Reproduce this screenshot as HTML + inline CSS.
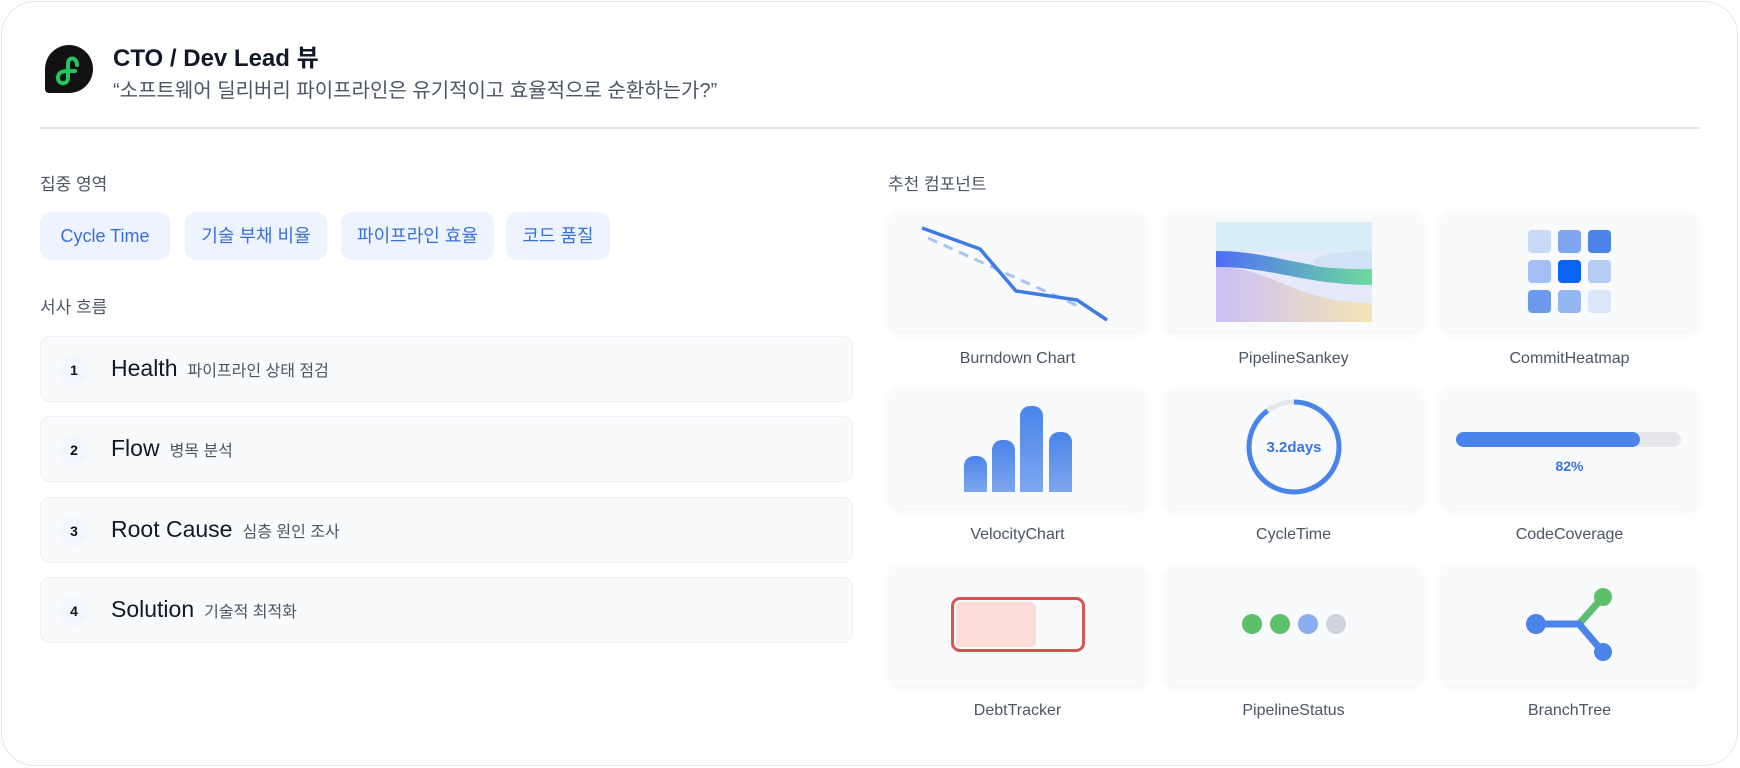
<!DOCTYPE html>
<html><head><meta charset="utf-8"><style>
*{margin:0;padding:0;box-sizing:border-box}
body{width:1740px;height:768px;background:#fff;font-family:"Liberation Sans","Noto Sans CJK KR",sans-serif;position:relative;overflow:hidden}
.card{position:absolute;left:1px;top:1px;width:1737px;height:765px;border:1px solid #e5e7eb;border-radius:34px;background:#fff}
.abs{position:absolute}
.title{left:113px;top:38px;font-size:24px;font-weight:bold;color:#111827}
.sub{left:113px;top:74px;font-size:20px;color:#4b5563}
.hr{left:40px;top:127px;width:1660px;height:2px;background:#e5e7eb}
.sec{font-size:17px;color:#4b5563}
.chip{position:absolute;top:212px;height:48px;background:#eef4ff;border-radius:11px;color:#3b6fd8;font-size:18px;line-height:48px;text-align:center}
.step{position:absolute;left:40px;width:813px;height:66px;background:#f9fafb;border:1px solid #eef0f3;border-radius:10px}
.num{position:absolute;left:18px;top:18px;width:30px;height:30px;border-radius:50%;background:#f3f6fc;font-size:14px;font-weight:bold;line-height:30px;text-align:center;color:#111}
.st{position:absolute;left:70px;top:18px;font-size:23px;color:#111827;white-space:nowrap}
.st span{font-size:16px;color:#4b5563;margin-left:10px}
.cc{position:absolute;width:259px;height:120px;background:#f8fafc;border-radius:12px;box-shadow:0 3px 8px rgba(0,0,0,.05)}
.lb{position:absolute;width:259px;text-align:center;font-size:16px;color:#4b5563}
</style></head><body>
<div class="card"></div>
<svg class="abs" style="left:45px;top:45px" width="49" height="49" viewBox="0 0 49 49">
<path d="M0 24A24 24 0 1 1 24 48H4a4 4 0 0 1-4-4Z" fill="#111"/>
<path d="M32 20C32 12 23 11 23 19V33C23 40 13 40 13 33C13 27 18 26 23 26H30" fill="none" stroke="#22c55e" stroke-width="4" stroke-linecap="round"/>
</svg>
<div class="abs title">CTO / Dev Lead 뷰</div>
<div class="abs sub">“소프트웨어 딜리버리 파이프라인은 유기적이고 효율적으로 순환하는가?”</div>
<div class="abs hr"></div>
<div class="abs sec" style="left:40px;top:170px">집중 영역</div>
<div class="chip" style="left:40px;width:130px">Cycle Time</div>
<div class="chip" style="left:185px;width:142px">기술 부채 비율</div>
<div class="chip" style="left:341px;width:153px">파이프라인 효율</div>
<div class="chip" style="left:506px;width:104px">코드 품질</div>
<div class="abs sec" style="left:40px;top:293px">서사 흐름</div>
<div class="step" style="top:336px"><div class="num">1</div><div class="st">Health<span>파이프라인 상태 점검</span></div></div>
<div class="step" style="top:416px"><div class="num">2</div><div class="st">Flow<span>병목 분석</span></div></div>
<div class="step" style="top:497px"><div class="num">3</div><div class="st">Root Cause<span>심층 원인 조사</span></div></div>
<div class="step" style="top:577px"><div class="num">4</div><div class="st">Solution<span>기술적 최적화</span></div></div>
<div class="abs sec" style="left:888px;top:170px">추천 컴포넌트</div>

<div class="cc" style="left:888px;top:211px"><svg width="259" height="120">
<path d="M40 27L190 95" stroke="#a9c3f5" stroke-width="3" stroke-dasharray="10 7" fill="none"/>
<path d="M34 17L92 38L128 80L189 89L219 109" stroke="#3f7be6" stroke-width="3.5" fill="none" stroke-linejoin="round"/>
</svg></div>
<div class="cc" style="left:1164px;top:211px"><svg width="259" height="120">
<defs><linearGradient id="g1"><stop offset="0" stop-color="#4f6ef7"/><stop offset="1" stop-color="#6ddb9c"/></linearGradient>
<linearGradient id="g2"><stop offset="0" stop-color="#c7b8f7"/><stop offset="1" stop-color="#f8e3a6"/></linearGradient></defs>
<rect x="52" y="11" width="156" height="100" fill="#d6eef9"/>
<rect x="52" y="40" width="156" height="71" fill="#e4e9fb"/>
<path d="M52 40C110 40 140 60 208 58V74C140 74 110 56 52 56Z" fill="url(#g1)"/>
<path d="M52 56C110 56 130 92 208 92V111H52Z" fill="url(#g2)" opacity=".85"/>
<path d="M150 48C170 40 190 40 208 40V58C190 58 170 58 150 55Z" fill="#cfe3f7"/>
</svg></div>
<div class="cc" style="left:1440px;top:211px">
<div class="abs" style="left:88px;top:19px;width:23px;height:23px;border-radius:4px;background:#c9d9f8"></div>
<div class="abs" style="left:118px;top:19px;width:23px;height:23px;border-radius:4px;background:#7fa6ef"></div>
<div class="abs" style="left:148px;top:19px;width:23px;height:23px;border-radius:4px;background:#4a84ea"></div>
<div class="abs" style="left:88px;top:49px;width:23px;height:23px;border-radius:4px;background:#a3bff3"></div>
<div class="abs" style="left:118px;top:49px;width:23px;height:23px;border-radius:4px;background:#0a63f5"></div>
<div class="abs" style="left:148px;top:49px;width:23px;height:23px;border-radius:4px;background:#b4cdf7"></div>
<div class="abs" style="left:88px;top:79px;width:23px;height:23px;border-radius:4px;background:#6c9bed"></div>
<div class="abs" style="left:118px;top:79px;width:23px;height:23px;border-radius:4px;background:#94b6f1"></div>
<div class="abs" style="left:148px;top:79px;width:23px;height:23px;border-radius:4px;background:#dbe6fb"></div>
</div>
<div class="lb" style="left:888px;top:350px">Burndown Chart</div>
<div class="lb" style="left:1164px;top:350px">PipelineSankey</div>
<div class="lb" style="left:1440px;top:350px">CommitHeatmap</div>

<div class="cc" style="left:888px;top:388px">
<div class="abs" style="left:76px;top:68px;width:23px;height:36px;border-radius:10px 10px 0 0;background:linear-gradient(#4a84ea,#7ea6ef)"></div>
<div class="abs" style="left:104px;top:52px;width:23px;height:52px;border-radius:10px 10px 0 0;background:linear-gradient(#4a84ea,#7ea6ef)"></div>
<div class="abs" style="left:132px;top:18px;width:23px;height:86px;border-radius:10px 10px 0 0;background:linear-gradient(#4a84ea,#7ea6ef)"></div>
<div class="abs" style="left:161px;top:44px;width:23px;height:60px;border-radius:10px 10px 0 0;background:linear-gradient(#4a84ea,#7ea6ef)"></div>
</div>
<div class="cc" style="left:1164px;top:388px"><svg width="259" height="120">
<circle cx="130" cy="59" r="45" fill="none" stroke="#e5e7eb" stroke-width="5"/>
<circle cx="130" cy="59" r="45" fill="none" stroke="#4a84ea" stroke-width="5" stroke-dasharray="254 283" transform="rotate(-90 130 59)"/>
<text x="130" y="64" text-anchor="middle" font-family="Liberation Sans" font-weight="bold" font-size="15" fill="#3b74de">3.2days</text>
</svg></div>
<div class="cc" style="left:1440px;top:388px">
<div class="abs" style="left:16px;top:44px;width:225px;height:15px;border-radius:8px;background:#e5e7eb"></div>
<div class="abs" style="left:16px;top:44px;width:184px;height:15px;border-radius:8px;background:#4a84ea"></div>
<div class="abs" style="left:0;top:70px;width:259px;text-align:center;font-size:14px;font-weight:bold;color:#3b74de">82%</div>
</div>
<div class="lb" style="left:888px;top:526px">VelocityChart</div>
<div class="lb" style="left:1164px;top:526px">CycleTime</div>
<div class="lb" style="left:1440px;top:526px">CodeCoverage</div>

<div class="cc" style="left:888px;top:565px">
<div class="abs" style="left:63px;top:32px;width:134px;height:55px;border:3px solid #d9534f;border-radius:9px"></div>
<div class="abs" style="left:68px;top:37px;width:80px;height:45px;border-radius:5px;background:#fadcd9"></div>
</div>
<div class="cc" style="left:1164px;top:565px"><svg width="259" height="120">
<circle cx="88" cy="59" r="10" fill="#5cbf6a"/><circle cx="116" cy="59" r="10" fill="#5cbf6a"/>
<circle cx="144" cy="59" r="10" fill="#8aaef0"/><circle cx="172" cy="59" r="10" fill="#d1d5db"/>
</svg></div>
<div class="cc" style="left:1440px;top:565px"><svg width="259" height="120">
<path d="M139 59L163 32" stroke="#5cbf6a" stroke-width="7" stroke-linecap="round"/>
<path d="M96 59H139L163 87" stroke="#4a84ea" stroke-width="7" fill="none" stroke-linecap="round" stroke-linejoin="round"/>
<circle cx="96" cy="59" r="10" fill="#4a84ea"/><circle cx="163" cy="32" r="9" fill="#5cbf6a"/><circle cx="163" cy="87" r="9" fill="#4a84ea"/>
</svg></div>
<div class="lb" style="left:888px;top:702px">DebtTracker</div>
<div class="lb" style="left:1164px;top:702px">PipelineStatus</div>
<div class="lb" style="left:1440px;top:702px">BranchTree</div>
</body></html>
